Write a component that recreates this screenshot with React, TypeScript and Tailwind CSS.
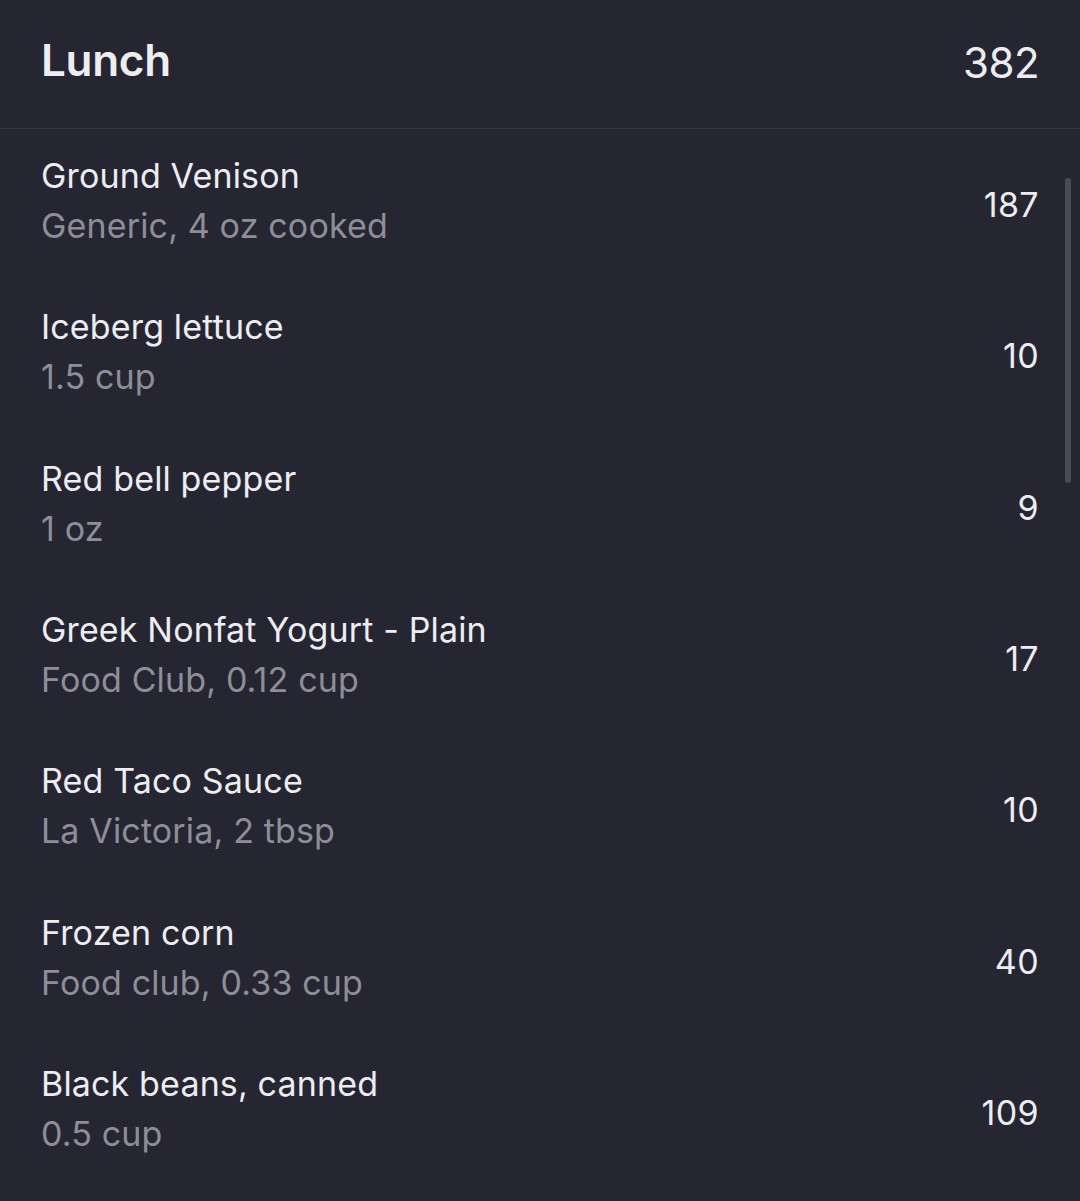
const items = [
  { name: 'Ground Venison', detail: 'Generic, 4 oz cooked', cal: 187 },
  { name: 'Iceberg lettuce', detail: '1.5 cup', cal: 10 },
  { name: 'Red bell pepper', detail: '1 oz', cal: 9 },
  { name: 'Greek Nonfat Yogurt - Plain', detail: 'Food Club, 0.12 cup', cal: 17 },
  { name: 'Red Taco Sauce', detail: 'La Victoria, 2 tbsp', cal: 10 },
  { name: 'Frozen corn', detail: 'Food club, 0.33 cup', cal: 40 },
  { name: 'Black beans, canned', detail: '0.5 cup', cal: 109 },
];

export default function App() {
  return (
    <div className="w-[1080px] h-[1201px] overflow-hidden bg-[#252631] font-['Inter',sans-serif] text-[#ededf1]">
      <div className="h-[129px] flex items-center justify-between pl-[41px] pr-[41px] border-b border-[#353641]">
        <h1 className="text-[44px] font-semibold tracking-[-0.3px] -mt-[8px]">Lunch</h1>
        <span className="text-[42px] tracking-[-0.5px] -mt-[4px]">382</span>
      </div>
      <div className="relative">
        <ul>
          {items.map((item) => (
            <li key={item.name} className="h-[151.3px] flex items-center justify-between pl-[41px] pr-[41px]">
              <div className="flex flex-col pb-[7px] tracking-[0.15px]">
                <span className="text-[34px] leading-[50px]">{item.name}</span>
                <span className="text-[34px] leading-[50px] text-[#8d8e97]">{item.detail}</span>
              </div>
              <span className="text-[34px] tracking-[0.4px]">{item.cal}</span>
            </li>
          ))}
        </ul>
        <div className="absolute right-[9px] top-[49px] w-[6px] h-[305px] rounded-full bg-[#4a4b56]" />
      </div>
    </div>
  );
}
